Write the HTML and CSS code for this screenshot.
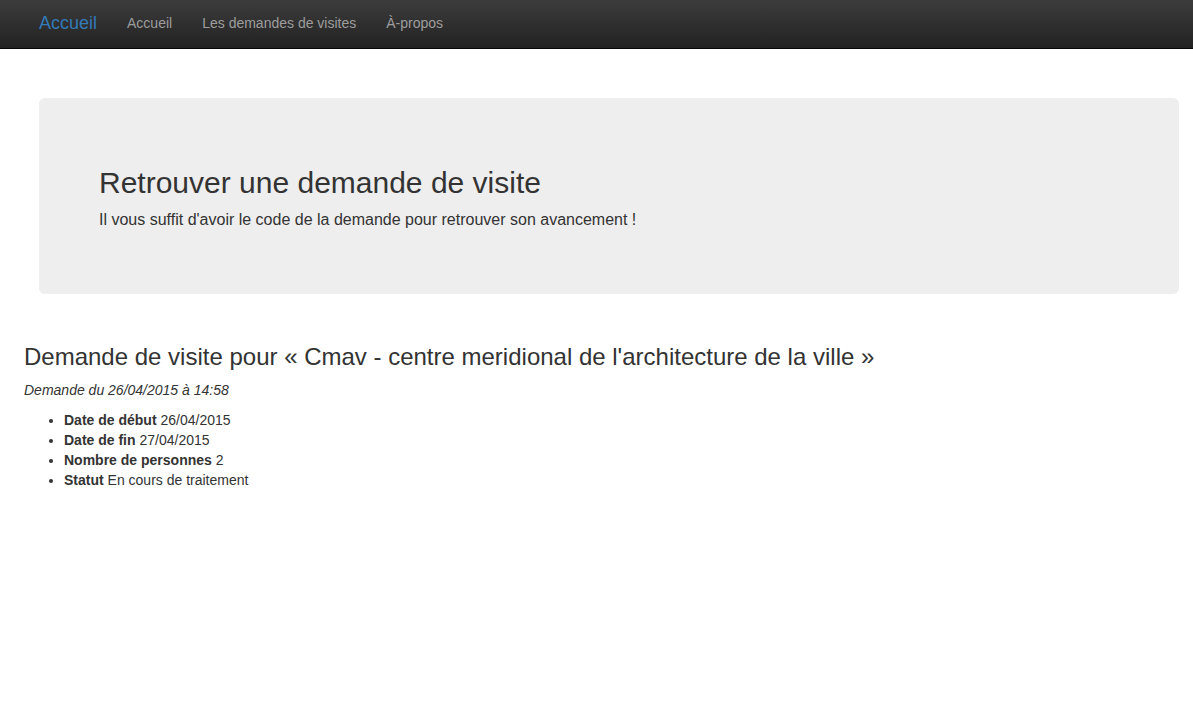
FILE: index.html
```html
<!DOCTYPE html>
<html lang="fr">
<head>
<meta charset="utf-8">
<title>Demande de visite</title>
<link rel="stylesheet" href="styles.css">
</head>
<body>
<nav class="navbar">
  <a class="brand" href="#">Accueil</a>
  <ul class="nav">
    <li><a href="#">Accueil</a></li>
    <li><a href="#">Les demandes de visites</a></li>
    <li><a href="#">À-propos</a></li>
  </ul>
</nav>
<main class="main">
  <section class="jumbotron">
    <h1>Retrouver une demande de visite</h1>
    <p>Il vous suffit d'avoir le code de la demande pour retrouver son avancement !</p>
  </section>
  <h3 class="title">Demande de visite pour « Cmav - centre meridional de l'architecture de la ville »</h3>
  <p class="date"><em>Demande du 26/04/2015 à 14:58</em></p>
  <ul class="details">
    <li><strong>Date de début</strong> 26/04/2015</li>
    <li><strong>Date de fin</strong> 27/04/2015</li>
    <li><strong>Nombre de personnes</strong> 2</li>
    <li><strong>Statut</strong> En cours de traitement</li>
  </ul>
</main>
</body>
</html>
```
FILE: styles.css
```css
* { box-sizing: border-box; }
html, body { margin: 0; padding: 0; }
body {
  font-family: "Liberation Sans", Arial, Helvetica, sans-serif;
  font-size: 14px;
  line-height: 1.42857143;
  color: #333;
  background: #fff;
}
a { text-decoration: none; }

.navbar {
  display: flex;
  align-items: center;
  height: 49px;
  padding-left: 24px;
  background: linear-gradient(to bottom, #3c3c3c 0%, #222 100%);
  border-bottom: 1px solid #080808;
}
.brand {
  font-size: 18px;
  line-height: 20px;
  padding: 0 15px;
  color: #337ab7;
  margin-top: -3px;
}
.nav {
  display: flex;
  list-style: none;
  margin: 0;
  padding: 0;
}
.nav a {
  display: block;
  padding: 0 15px;
  line-height: 20px;
  color: #9d9d9d;
  margin-top: -3px;
}

.main {
  padding: 0 14px 0 24px;
}
.jumbotron {
  margin: 49px 0 50px 15px;
  padding: 48px 60px;
  background: #eee;
  border-radius: 6px;
}
.jumbotron h1 {
  margin: 20px 0 10px;
  font-size: 30px;
  font-weight: 500;
  line-height: 1.1;
}
.jumbotron p {
  margin: 0 0 14px;
  font-size: 16px;
}
.title {
  margin: 20px 0 10px;
  font-size: 24px;
  font-weight: 500;
  line-height: 1.1;
}
.date {
  margin: 0 0 10px;
}
.details {
  margin: 0 0 10px;
  padding-left: 40px;
}
.details strong { font-weight: 700; }
```
